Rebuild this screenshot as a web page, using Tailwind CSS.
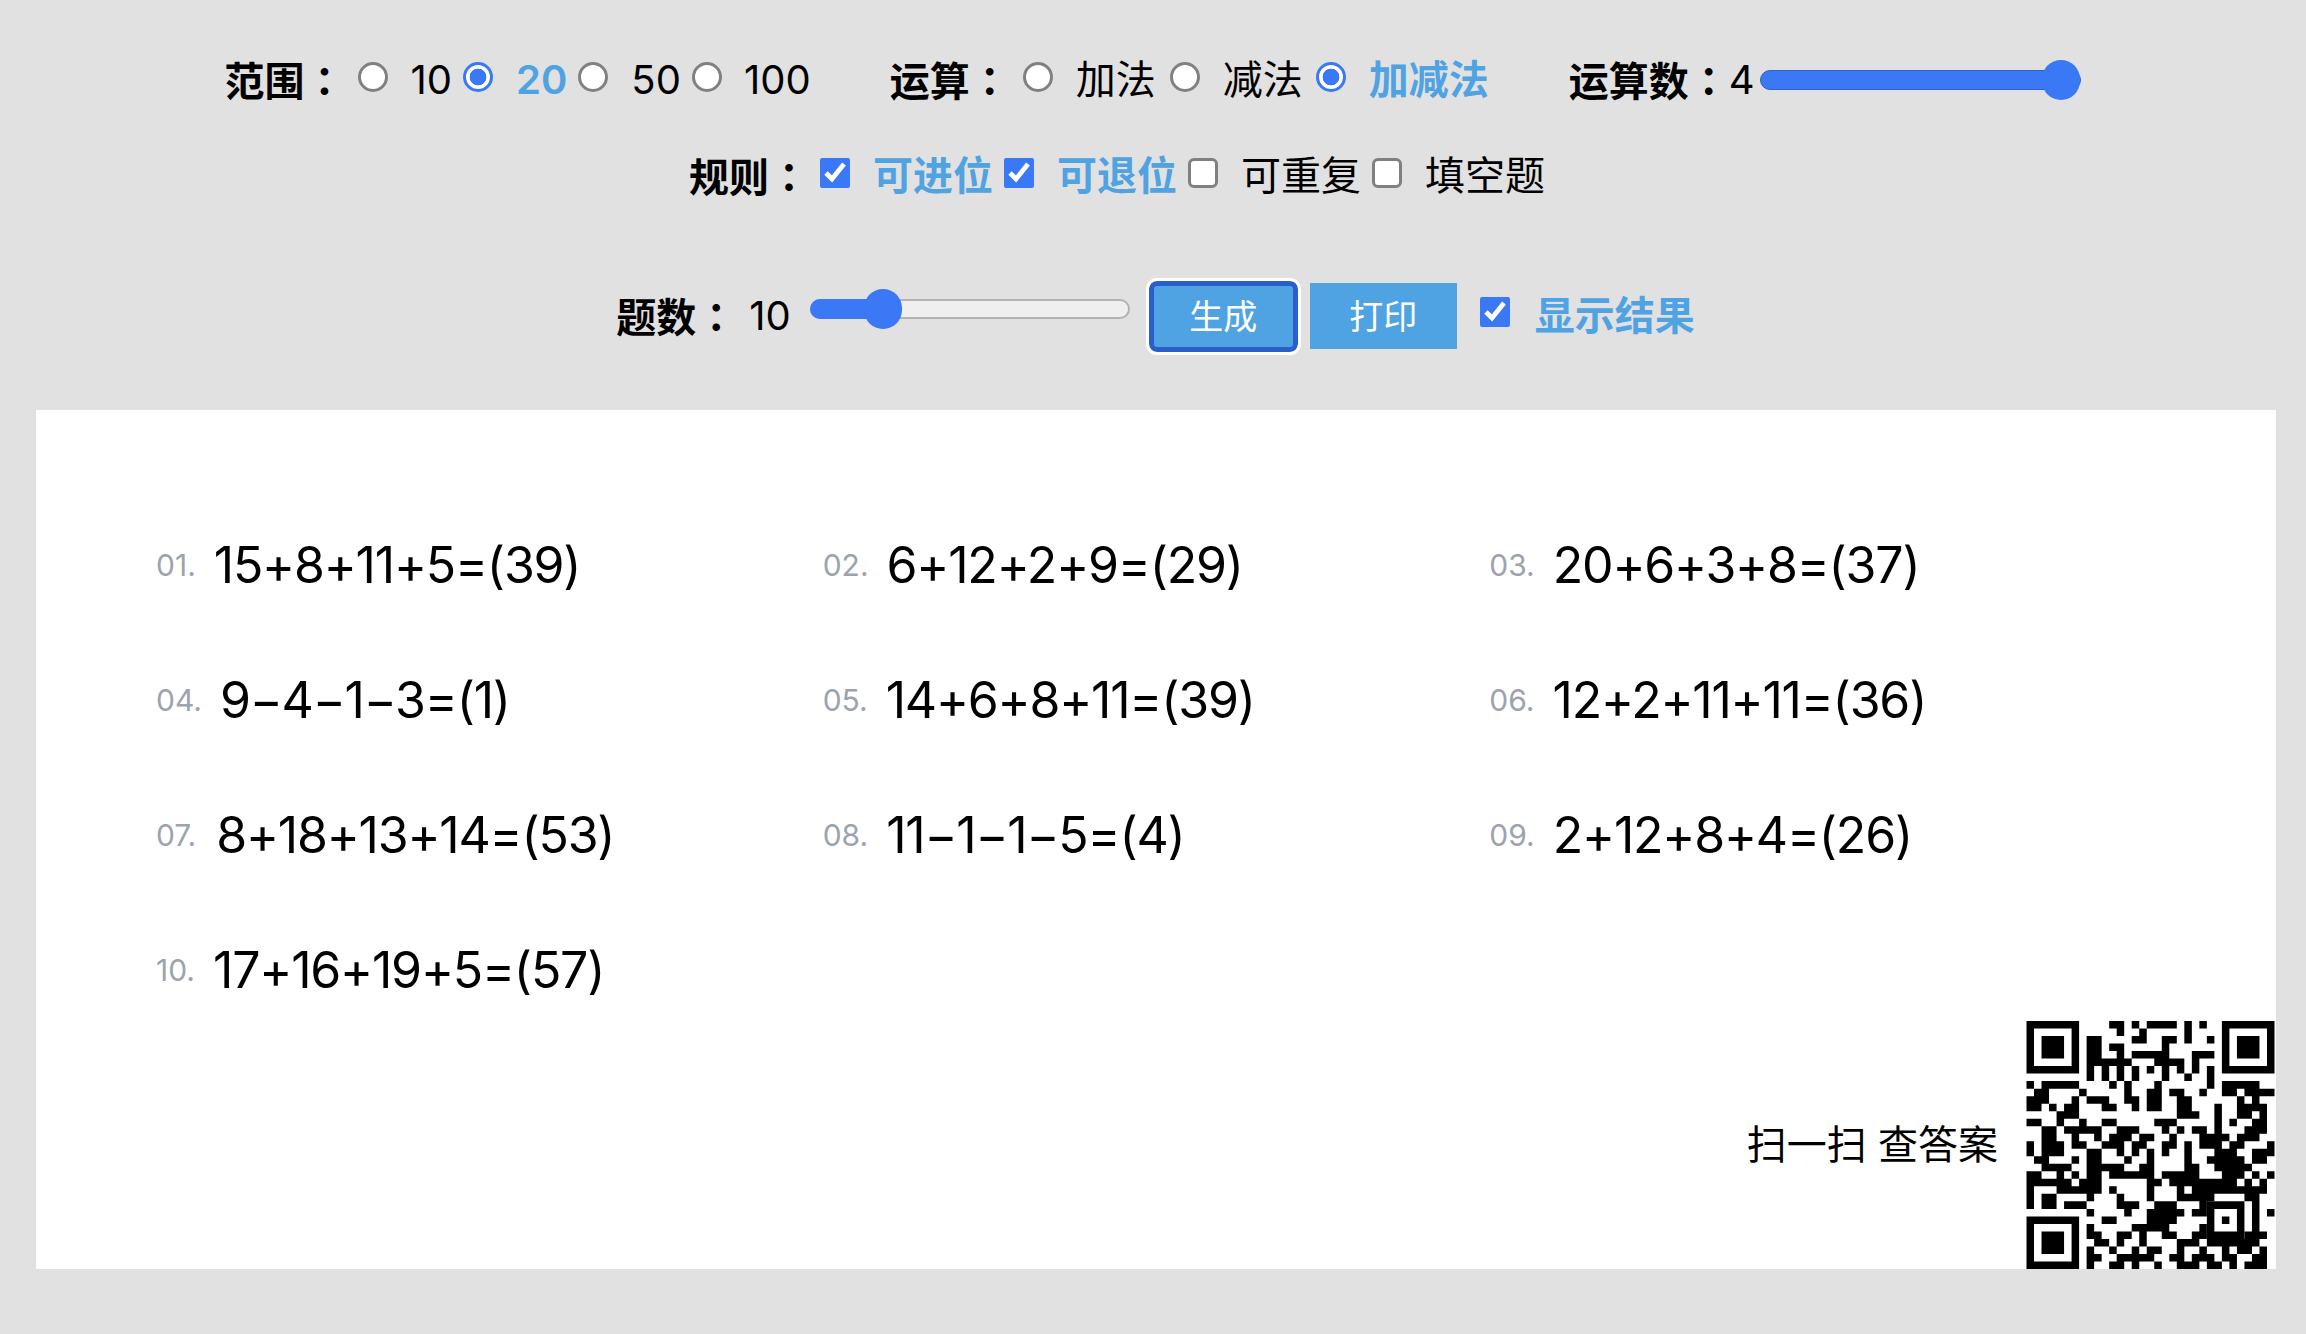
<!doctype html>
<html lang="zh">
<head>
<meta charset="utf-8">
<title>Math</title>
<script src="https://cdn.jsdelivr.net/npm/@tailwindcss/browser@4"></script>
</head>
<body class="bg-[#e1e1e1] h-[1334px] overflow-hidden text-black text-[40px] [font-family:Inter,'Noto_Sans_CJK_SC',sans-serif]">
<div class="flex flex-col items-center pt-[50px] h-[410px]">
  <div class="flex items-center justify-center h-[60px] leading-none">
    <b class="font-bold">范围<span lang="zh-Hant" class="[font-family:'Noto_Sans_CJK_TC',sans-serif]">：</span></b>
    <label class="flex items-center gap-[23px] ml-[13px]"><input type="radio" name="a" class="appearance-none w-[30px] h-[30px] mb-[6px] rounded-full border-[3px] border-[#808080] bg-white checked:border-[#3b78f5] checked:bg-[radial-gradient(circle_closest-side,#3b78f5_68%,white_72%)]"><span>10</span></label>
    <label class="flex items-center gap-[23px] ml-[11px] text-[#4fa3e3] font-semibold"><input type="radio" name="a" checked class="appearance-none w-[30px] h-[30px] mb-[6px] rounded-full border-[3px] border-[#808080] bg-white checked:border-[#3b78f5] checked:bg-[radial-gradient(circle_closest-side,#3b78f5_68%,white_72%)]"><span>20</span></label>
    <label class="flex items-center gap-[23px] ml-[11px]"><input type="radio" name="a" class="appearance-none w-[30px] h-[30px] mb-[6px] rounded-full border-[3px] border-[#808080] bg-white checked:border-[#3b78f5] checked:bg-[radial-gradient(circle_closest-side,#3b78f5_68%,white_72%)]"><span>50</span></label>
    <label class="flex items-center gap-[22px] ml-[11px]"><input type="radio" name="a" class="appearance-none w-[30px] h-[30px] mb-[6px] rounded-full border-[3px] border-[#808080] bg-white checked:border-[#3b78f5] checked:bg-[radial-gradient(circle_closest-side,#3b78f5_68%,white_72%)]"><span>100</span></label>
    <b class="font-bold ml-[79px]">运算<span lang="zh-Hant" class="[font-family:'Noto_Sans_CJK_TC',sans-serif]">：</span></b>
    <label class="flex items-center gap-[23px] ml-[13px]"><input type="radio" name="b" class="appearance-none w-[30px] h-[30px] mb-[6px] rounded-full border-[3px] border-[#808080] bg-white checked:border-[#3b78f5] checked:bg-[radial-gradient(circle_closest-side,#3b78f5_68%,white_72%)]"><span>加法</span></label>
    <label class="flex items-center gap-[23px] ml-[14px]"><input type="radio" name="b" class="appearance-none w-[30px] h-[30px] mb-[6px] rounded-full border-[3px] border-[#808080] bg-white checked:border-[#3b78f5] checked:bg-[radial-gradient(circle_closest-side,#3b78f5_68%,white_72%)]"><span>减法</span></label>
    <label class="flex items-center gap-[23px] ml-[13px] text-[#4fa3e3] font-semibold"><input type="radio" name="b" checked class="appearance-none w-[30px] h-[30px] mb-[6px] rounded-full border-[3px] border-[#808080] bg-white checked:border-[#3b78f5] checked:bg-[radial-gradient(circle_closest-side,#3b78f5_68%,white_72%)]"><span>加减法</span></label>
    <b class="font-bold ml-[80px]">运算数<span lang="zh-Hant" class="[font-family:'Noto_Sans_CJK_TC',sans-serif]">：</span></b>
    <span>4</span>
    <div class="relative ml-[6px] w-[321px] h-[20px] rounded-full bg-[#3b78f5] border border-[#2f62c9]">
      <div class="absolute right-0 top-[-11px] w-[38px] h-[40px] rounded-full bg-[#3b78f5]"></div>
    </div>
  </div>
  <div class="flex items-center justify-center h-[60px] mt-[36px] mr-[72px] leading-none">
    <b class="font-bold">规则<span lang="zh-Hant" class="[font-family:'Noto_Sans_CJK_TC',sans-serif]">：</span></b>
    <label class="flex items-center gap-[23px] ml-[11px] text-[#4fa3e3] font-semibold"><input type="checkbox" checked class="w-[30px] h-[30px] mb-[6px] accent-[#3b78f5]"><span>可进位</span></label>
    <label class="flex items-center gap-[23px] ml-[11px] text-[#4fa3e3] font-semibold"><input type="checkbox" checked class="w-[30px] h-[30px] mb-[6px] accent-[#3b78f5]"><span>可退位</span></label>
    <label class="flex items-center gap-[23px] ml-[11px]"><input type="checkbox" class="appearance-none w-[30px] h-[30px] mb-[6px] rounded-[6px] border-[3px] border-[#808080] bg-white"><span>可重复</span></label>
    <label class="flex items-center gap-[23px] ml-[11px]"><input type="checkbox" class="appearance-none w-[30px] h-[30px] mb-[6px] rounded-[6px] border-[3px] border-[#808080] bg-white"><span>填空题</span></label>
  </div>
  <div class="flex items-center justify-center h-[78px] mt-[71px] ml-[5px] leading-none">
    <b class="font-bold">题数<span lang="zh-Hant" class="[font-family:'Noto_Sans_CJK_TC',sans-serif]">：</span></b>
    <span class="ml-[13px]">10</span>
    <div class="relative ml-[19px] w-[320px] h-[20px] rounded-full bg-[#efefef] border-2 border-[#b2b2b2] mb-[14px]">
      <div class="absolute left-[-2px] top-[-2px] h-[20px] w-[60px] rounded-l-full bg-[#3b78f5]"></div>
      <div class="absolute left-[52px] top-[-12px] w-[38px] h-[40px] rounded-full bg-[#3b78f5]"></div>
    </div>
    <button class="ml-[19px] w-[149px] h-[71px] pt-[2px] bg-[#4fa3e3] text-white text-[34px] rounded-[8px] border-[5px] border-[#2a5fc9] outline-[3px] outline-white">生成</button>
    <button class="ml-[12px] w-[147px] h-[66px] pt-[2px] bg-[#4fa3e3] text-white text-[34px]">打印</button>
    <label class="flex items-center gap-[25px] ml-[23px] text-[#4fa3e3] font-semibold"><input type="checkbox" checked class="w-[30px] h-[30px] mb-2 accent-[#3b78f5]"><span>显示结果</span></label>
  </div>
</div>
<main class="mx-[36px] w-[2240px] h-[859px] bg-white flex flex-col pt-[87px]">
  <div class="grid grid-cols-3 w-[2000px] ml-[120px] h-[524px] auto-rows-[135.3px] text-[50px] tracking-[-1.2px] leading-none">
    <div class="flex items-center gap-[18px] h-[135px]"><span class="text-[30px] tracking-normal text-[#9ca3af]">01.</span><span>15+8+11+5=(39)</span></div>
    <div class="flex items-center gap-[18px] h-[135px]"><span class="text-[30px] tracking-normal text-[#9ca3af]">02.</span><span>6+12+2+9=(29)</span></div>
    <div class="flex items-center gap-[18px] h-[135px]"><span class="text-[30px] tracking-normal text-[#9ca3af]">03.</span><span>20+6+3+8=(37)</span></div>
    <div class="flex items-center gap-[18px] h-[135px]"><span class="text-[30px] tracking-normal text-[#9ca3af]">04.</span><span>9−4−1−3=(1)</span></div>
    <div class="flex items-center gap-[18px] h-[135px]"><span class="text-[30px] tracking-normal text-[#9ca3af]">05.</span><span>14+6+8+11=(39)</span></div>
    <div class="flex items-center gap-[18px] h-[135px]"><span class="text-[30px] tracking-normal text-[#9ca3af]">06.</span><span>12+2+11+11=(36)</span></div>
    <div class="flex items-center gap-[20px] h-[135px]"><span class="text-[30px] tracking-normal text-[#9ca3af]">07.</span><span>8+18+13+14=(53)</span></div>
    <div class="flex items-center gap-[18px] h-[135px]"><span class="text-[30px] tracking-normal text-[#9ca3af]">08.</span><span>11−1−1−5=(4)</span></div>
    <div class="flex items-center gap-[18px] h-[135px]"><span class="text-[30px] tracking-normal text-[#9ca3af]">09.</span><span>2+12+8+4=(26)</span></div>
    <div class="flex items-center gap-[18px] h-[135px]"><span class="text-[30px] tracking-normal text-[#9ca3af]">10.</span><span>17+16+19+5=(57)</span></div>
  </div>
  <div class="flex justify-end items-center gap-[28px] h-[248px] pr-px">
    <span class="whitespace-pre">扫一扫 查答案</span>
    <svg viewBox="0 0 33 33" class="w-[249px] h-[248px] blur-[0.5px]">
      <path fill="#000" fill-rule="evenodd" d="M0 0h7v7h-7zM1 1v5h5v-5zM2 2h3v3h-3zM26 0h7v7h-7zM27 1v5h5v-5zM28 2h3v3h-3zM0 26h7v7h-7zM1 27v5h5v-5zM2 28h3v3h-3zM24 24h5v5h-5zM25 25v3h3v-3zM26 26h1v1h-1z"/>
      <path stroke="#000" stroke-width="1" fill="none" d="M11 .5h2M14 .5h1M16 .5h4M21 .5h1M23 .5h1M12 1.5h1M15 1.5h1M21 1.5h1M8 2.5h2M14 2.5h2M18 2.5h2M21 2.5h1M24 2.5h1M8 3.5h2M11 3.5h2M18 3.5h1M8 4.5h2M12 4.5h1M14 4.5h5M22 4.5h3M8 5.5h6M17 5.5h4M22 5.5h1M8 6.5h1M10 6.5h1M12 6.5h1M14 6.5h1M16 6.5h1M18 6.5h1M20 6.5h1M22 6.5h1M24 6.5h1M8 7.5h1M10 7.5h1M12 7.5h1M14 7.5h1M18 7.5h1M21 7.5h1M24 7.5h1M0 8.5h1M2 8.5h5M11 8.5h1M13 8.5h1M17 8.5h1M24 8.5h1M26 8.5h5M1 9.5h2M7 9.5h1M13 9.5h1M16 9.5h2M19 9.5h2M23 9.5h1M26 9.5h2M29 9.5h4M0 10.5h3M6 10.5h1M8 10.5h3M13 10.5h2M16 10.5h2M20 10.5h2M28 10.5h1M30 10.5h1M0 11.5h2M3 11.5h1M5 11.5h2M10 11.5h2M14 11.5h1M16 11.5h2M20 11.5h2M25 11.5h1M28 11.5h4M4 12.5h3M20 12.5h3M25 12.5h1M28 12.5h2M31 12.5h1M0 13.5h2M4 13.5h1M7 13.5h1M10 13.5h2M17 13.5h3M25 13.5h1M27 13.5h1M30 13.5h2M2 14.5h2M5 14.5h3M8 14.5h2M12 14.5h3M18 14.5h1M20 14.5h1M22 14.5h2M25 14.5h1M29 14.5h3M2 15.5h2M6 15.5h1M9 15.5h1M11 15.5h3M15 15.5h2M19 15.5h1M23 15.5h4M28 15.5h3M0 16.5h1M2 16.5h2M4 16.5h1M6 16.5h2M10 16.5h3M14 16.5h2M18 16.5h2M21 16.5h1M23 16.5h3M27 16.5h2M32 16.5h1M0 17.5h1M2 17.5h3M8 17.5h2M12 17.5h1M14 17.5h1M16 17.5h1M18 17.5h1M21 17.5h1M25 17.5h3M30 17.5h3M1 18.5h2M6 18.5h1M8 18.5h2M13 18.5h1M16 18.5h1M21 18.5h1M24 18.5h5M30 18.5h2M2 19.5h4M8 19.5h5M15 19.5h2M21 19.5h2M25 19.5h5M0 20.5h2M4 20.5h1M6 20.5h1M8 20.5h2M11 20.5h6M18 20.5h5M26 20.5h3M30 20.5h1M32 20.5h1M0 21.5h6M7 21.5h3M16 21.5h2M19 21.5h4M23 21.5h5M29 21.5h1M31 21.5h1M0 22.5h1M4 22.5h6M11 22.5h1M16 22.5h1M20 22.5h1M22 22.5h7M29 22.5h3M0 23.5h1M2 23.5h2M8 23.5h1M12 23.5h1M16 23.5h1M20 23.5h4M24 23.5h1M29 23.5h2M0 24.5h1M2 24.5h2M5 24.5h3M12 24.5h3M17 24.5h3M23 24.5h1M30 24.5h1M8 25.5h1M13 25.5h1M16 25.5h5M22 25.5h2M30 25.5h1M32 25.5h1M10 26.5h2M16 26.5h4M30 26.5h1M8 27.5h1M14 27.5h2M16 27.5h3M23 27.5h1M30 27.5h1M8 28.5h2M12 28.5h2M15 28.5h1M18 28.5h2M22 28.5h2M29 28.5h3M9 29.5h2M12 29.5h1M15 29.5h1M20 29.5h3M24 29.5h7M8 30.5h1M11 30.5h1M14 30.5h1M16 30.5h2M20 30.5h1M23 30.5h1M26 30.5h1M28 30.5h2M31 30.5h1M8 31.5h2M12 31.5h2M14 31.5h3M19 31.5h2M22 31.5h3M26 31.5h2M30 31.5h2M8 32.5h1M11 32.5h2M14 32.5h1M17 32.5h1M20 32.5h3M24 32.5h2M27 32.5h1M29 32.5h2M31 32.5h1"/>
    </svg>
  </div>
</main>
</body>
</html>
